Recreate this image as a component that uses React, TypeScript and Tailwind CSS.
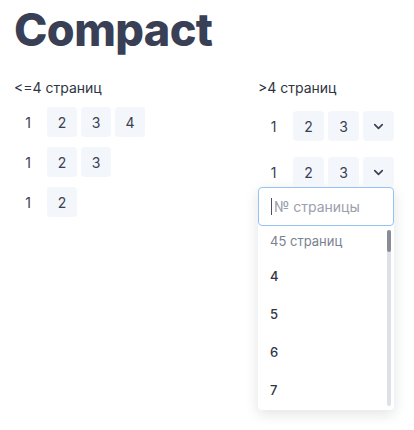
import { ChevronDown } from "lucide-react";

const cell = "flex h-[30px] items-center justify-center rounded-[4px] text-[14px] text-[#3a4052]";

function Row({ pages, more, w }: { pages: number; more?: boolean; w: string }) {
  return (
    <div className="flex gap-1">
      {Array.from({ length: pages }, (_, i) => (
        <div key={i} className={`${cell} ${w} ${i === 0 ? "" : "bg-[#f3f6fb]"}`}>
          {i + 1}
        </div>
      ))}
      {more && (
        <div className={`${cell} ${w} bg-[#f3f6fb]`}>
          <ChevronDown size={15} strokeWidth={2.6} />
        </div>
      )}
    </div>
  );
}

export default function App() {
  return (
    <div className="min-h-[430px] bg-white pl-[14px] pt-[7px] font-['Inter',sans-serif]">
      <h1 className="text-[45px] font-extrabold leading-none tracking-[-0.6px] text-[#393f55]">Compact</h1>

      <div className="mt-[26px] flex">
        <div className="w-[244px]">
          <p className="text-[14px] leading-5 text-[#2f3442]">&lt;=4 страниц</p>
          <div className="mt-[9px] -ml-px flex flex-col gap-[10px]">
            <Row pages={4} w="w-[30px]" />
            <Row pages={3} w="w-[30px]" />
            <Row pages={2} w="w-[30px]" />
          </div>
        </div>

        <div className="w-[136px]">
          <p className="text-[14px] leading-5 text-[#2f3442]">&gt;4 страниц</p>
          <div className="mt-[13px] flex flex-col gap-4">
            <Row pages={3} more w="w-[31px]" />
            <Row pages={3} more w="w-[31px]" />
          </div>

          <div className="rounded-[4px] bg-white shadow-[0_4px_14px_rgba(15,23,42,0.12)]">
            <div className="flex h-[39px] items-center rounded-[4px] border border-[#93c3f5] pl-[12px] text-[14px] text-[#9aa0ac]">
              <span className="mr-[2px] h-[17px] w-px bg-[#4b5160]" />
              № страницы
            </div>
            <div className="relative">
              <div className="flex h-[32px] items-center pl-[12px] text-[13px] text-[#7b8190]">45 страниц</div>
              {[4, 5, 6, 7].map((n) => (
                <div key={n} className="flex h-[38px] items-center pl-[12px] text-[13px] font-medium text-[#2f3442]">
                  {n}
                </div>
              ))}
              <div className="absolute right-[3px] top-[4px] bottom-[4px] w-[4px] rounded-full bg-[#dde0e6]">
                <div className="h-[22px] w-full rounded-full bg-[#878c97]" />
              </div>
            </div>
          </div>
        </div>
      </div>
    </div>
  );
}
